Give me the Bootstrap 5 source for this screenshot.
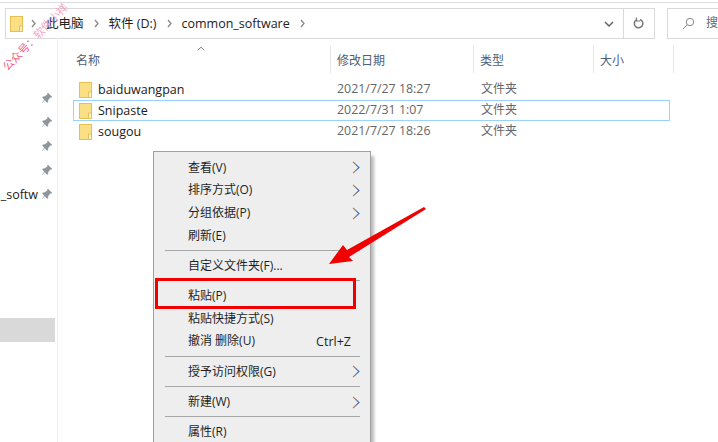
<!DOCTYPE html>
<html lang="zh-CN">
<head>
<meta charset="utf-8">
<title>文件夹</title>
<link href="https://cdn.jsdelivr.net/npm/bootstrap@5.3.0/dist/css/bootstrap.min.css" rel="stylesheet">
<style>
html,body{height:442px;overflow:hidden;background:#fff;}
body{font-family:"Open Sans","Noto Sans CJK SC",sans-serif;font-size:12px;color:#1a1a1a;line-height:1.2;position:relative;}
.win-top{height:1px;margin-top:2px;background:#dcdcdc;}
.toolbar{height:30px;margin-top:5px;padding-left:5px;gap:12px;}
.addr{width:651px;height:31px;border:1px solid #d9d9d9;}
.crumbs{flex:1;padding-left:4px;gap:10px;font-size:12.5px;color:#222;}
.crumb-sep{width:5px;height:9px;flex:none;}
.crumb-first{margin-left:-2px;}
.drop{width:28px;}
.refresh{width:31px;height:100%;border-left:1px solid #d9d9d9;}
.search{flex:1;height:31px;border:1px solid #d9d9d9;border-right:0;padding-left:14px;gap:11px;color:#666;}
.body-wrap{height:404px;}
.side{width:58px;border-right:1px solid #f0f0f0;padding-top:48px;position:relative;flex:none;}
.pin-row{height:24px;padding-right:4px;gap:3px;font-size:12.5px;overflow:hidden;color:#222;white-space:nowrap;}
.side-sel{height:24px;width:55px;background:#d9d9d9;margin-top:112px;}
.main{flex:1;padding-left:15px;}
.heads{height:27px;margin-top:8px;color:#4c607a;font-size:12px;}
.hcell{height:100%;border-right:1px solid #e5e5e5;padding-left:6px;padding-top:3px;flex:none;position:relative;}
.hc-name{width:258px;padding-left:3px;}
.hc-date{width:143px;}.hc-type{width:120px;}.hc-size{width:80px;}
.sort{position:absolute;left:124px;top:0;}
.rows{padding-top:6px;}
.frow{height:21px;width:597px;color:#666;border:1px solid transparent;}
.frow.sel{border-color:#99d1ff;}
.c1{width:257px;padding-left:5px;gap:6px;color:#1a1a1a;font-size:12.5px;flex:none;}
.c2{width:144px;padding-left:6px;flex:none;font-size:12.4px;}
.c3{padding-left:6px;}
.menuwin{position:absolute;left:153px;top:151px;width:218px;height:300px;background:#eeeeee;border:1px solid #a0a0a0;padding:4.5px 0 0 1px;box-shadow:4px 4px 3px -1px rgba(0,0,0,.28);color:#1f1f1f;font-size:12px;}
.mitem{height:22.7px;padding:0 10px 0 33px;}
.shortcut{margin-right:9px;font-size:12.5px;}
.msep{height:1px;margin:3px 10px 3.5px 10px;background:#a6a6a6;}
.redbox{position:absolute;left:155px;top:278px;width:201px;height:31px;border:3px solid #f00000;}
.overlay{position:absolute;left:0;top:0;pointer-events:none;}
.wmark{position:absolute;left:-9px;top:30px;color:#f7a3c6;font-size:11px;transform:rotate(-46deg);white-space:nowrap;}
.wmark-strong{color:#f0607f;}
</style>
</head>
<body>
<svg width="0" height="0" class="position-absolute">
<defs>
<linearGradient id="chevpaint" x1="0" y1="0" x2="1" y2="0"><stop offset="0" stop-color="#c9762e"/><stop offset="1" stop-color="#1f6fd6"/></linearGradient>
<symbol id="fold" viewBox="0 0 13 16"><rect x=".5" y=".5" width="12" height="15" fill="#fbdf85" stroke="#e6bf55"/><path d="M9.500 10v5.500h3V10z" fill="#fff3c4" stroke="#e6bf55"/></symbol>
<symbol id="pin" viewBox="0 0 12 12"><path d="M7 .8l4.200 4.200-1 .8-.8-.3L7.300 8l-.2 2-1 .7L3.800 8.300 1 11 .8 10.800l2.500-3-2.100-2.300.8-1 2-.2 2.400-2-.2-.8z" fill="#8f979e"/></symbol>
<symbol id="chev" viewBox="0 0 8 13"><path d="M1 .8L7 6.500 1 12.200" fill="none" stroke="url(#chevpaint)" stroke-width="1.100"/></symbol>
</defs>
</svg>
<div class="win-top"></div>
<div class="toolbar d-flex">
  <div class="addr d-flex align-items-center">
    <div class="crumbs d-flex align-items-center">
      <svg width="13" height="16"><use href="#fold"/></svg>
      <svg class="crumb-sep crumb-first" viewBox="0 0 5 9"><path d="M1 1l3 3.500-3 3.500" fill="none" stroke="#888" stroke-width="1.300"/></svg>
      <span>此电脑</span>
      <svg class="crumb-sep" viewBox="0 0 5 9"><path d="M1 1l3 3.500-3 3.500" fill="none" stroke="#888" stroke-width="1.300"/></svg>
      <span>软件 (D:)</span>
      <svg class="crumb-sep" viewBox="0 0 5 9"><path d="M1 1l3 3.500-3 3.500" fill="none" stroke="#888" stroke-width="1.300"/></svg>
      <span>common_software</span>
      <svg class="crumb-sep" viewBox="0 0 5 9"><path d="M1 1l3 3.500-3 3.500" fill="none" stroke="#888" stroke-width="1.300"/></svg>
    </div>
    <div class="drop d-flex justify-content-center"><svg width="10" height="6" viewBox="0 0 10 6"><path d="M1 1l4 4 4-4" fill="none" stroke="#666" stroke-width="1.500"/></svg></div>
    <div class="refresh d-flex align-items-center justify-content-center"><svg width="12" height="13" viewBox="0 0 12 13"><path d="M7 2.500a4.300 4.300 0 1 1-3.500.3" fill="none" stroke="#777" stroke-width="1.500"/><path d="M3.500 .5v3.500H7" fill="none" stroke="#777" stroke-width="1.200"/></svg></div>
  </div>
  <div class="search d-flex align-items-center">
    <svg width="13" height="13" viewBox="0 0 13 13"><circle cx="8" cy="5" r="3.700" fill="none" stroke="#888"/><path d="M5.300 7.700L1 12" stroke="#888"/></svg>
    <span>搜</span>
  </div>
</div>
<div class="body-wrap d-flex">
  <div class="side">
    <div class="pin-row d-flex align-items-center justify-content-end"><svg width="12" height="12"><use href="#pin"/></svg></div>
    <div class="pin-row d-flex align-items-center justify-content-end"><svg width="12" height="12"><use href="#pin"/></svg></div>
    <div class="pin-row d-flex align-items-center justify-content-end"><svg width="12" height="12"><use href="#pin"/></svg></div>
    <div class="pin-row d-flex align-items-center justify-content-end"><svg width="12" height="12"><use href="#pin"/></svg></div>
    <div class="pin-row d-flex align-items-center justify-content-end"><span>n_softw</span><svg class="flex-shrink-0" width="12" height="12"><use href="#pin"/></svg></div>
    <div class="side-sel"></div>
  </div>
  <div class="main">
    <div class="heads d-flex align-items-center">
      <div class="hcell hc-name d-flex align-items-center">名称<svg class="sort" width="8" height="5" viewBox="0 0 9 5"><path d="M.8 4.500L4.500 1l3.700 3.500" fill="none" stroke="#777"/></svg></div>
      <div class="hcell hc-date d-flex align-items-center">修改日期</div>
      <div class="hcell hc-type d-flex align-items-center">类型</div>
      <div class="hcell hc-size d-flex align-items-center">大小</div>
    </div>
    <div class="rows">
      <div class="frow d-flex align-items-center"><div class="c1 d-flex align-items-center"><svg width="13" height="16"><use href="#fold"/></svg>baiduwangpan</div><div class="c2">2021/7/27 18:27</div><div class="c3">文件夹</div></div>
      <div class="frow sel d-flex align-items-center"><div class="c1 d-flex align-items-center"><svg width="13" height="16"><use href="#fold"/></svg>Snipaste</div><div class="c2">2022/7/31 1:07</div><div class="c3">文件夹</div></div>
      <div class="frow d-flex align-items-center"><div class="c1 d-flex align-items-center"><svg width="13" height="16"><use href="#fold"/></svg>sougou</div><div class="c2">2021/7/27 18:26</div><div class="c3">文件夹</div></div>
    </div>
  </div>
</div>
<div class="menuwin">
  <div class="mitem d-flex align-items-center justify-content-between"><span>查看(V)</span><svg width="8" height="13"><use href="#chev"/></svg></div>
  <div class="mitem d-flex align-items-center justify-content-between"><span>排序方式(O)</span><svg width="8" height="13"><use href="#chev"/></svg></div>
  <div class="mitem d-flex align-items-center justify-content-between"><span>分组依据(P)</span><svg width="8" height="13"><use href="#chev"/></svg></div>
  <div class="mitem d-flex align-items-center"><span>刷新(E)</span></div>
  <div class="msep"></div>
  <div class="mitem d-flex align-items-center"><span>自定义文件夹(F)...</span></div>
  <div class="msep"></div>
  <div class="mitem d-flex align-items-center"><span>粘贴(P)</span></div>
  <div class="mitem d-flex align-items-center"><span>粘贴快捷方式(S)</span></div>
  <div class="mitem d-flex align-items-center justify-content-between"><span>撤消 删除(U)</span><span class="shortcut">Ctrl+Z</span></div>
  <div class="msep"></div>
  <div class="mitem d-flex align-items-center justify-content-between"><span>授予访问权限(G)</span><svg width="8" height="13"><use href="#chev"/></svg></div>
  <div class="msep"></div>
  <div class="mitem d-flex align-items-center justify-content-between"><span>新建(W)</span><svg width="8" height="13"><use href="#chev"/></svg></div>
  <div class="msep"></div>
  <div class="mitem d-flex align-items-center"><span>属性(R)</span></div>
</div>
<div class="redbox"></div>
<svg class="overlay" width="718" height="442"><polygon points="329,264 343,245 347,250 424,207 426,209 349,257 353,261" fill="#f00000"/></svg>
<div class="wmark"><span class="wmark-strong">公众号：</span>软件小祥</div>
</body>
</html>
